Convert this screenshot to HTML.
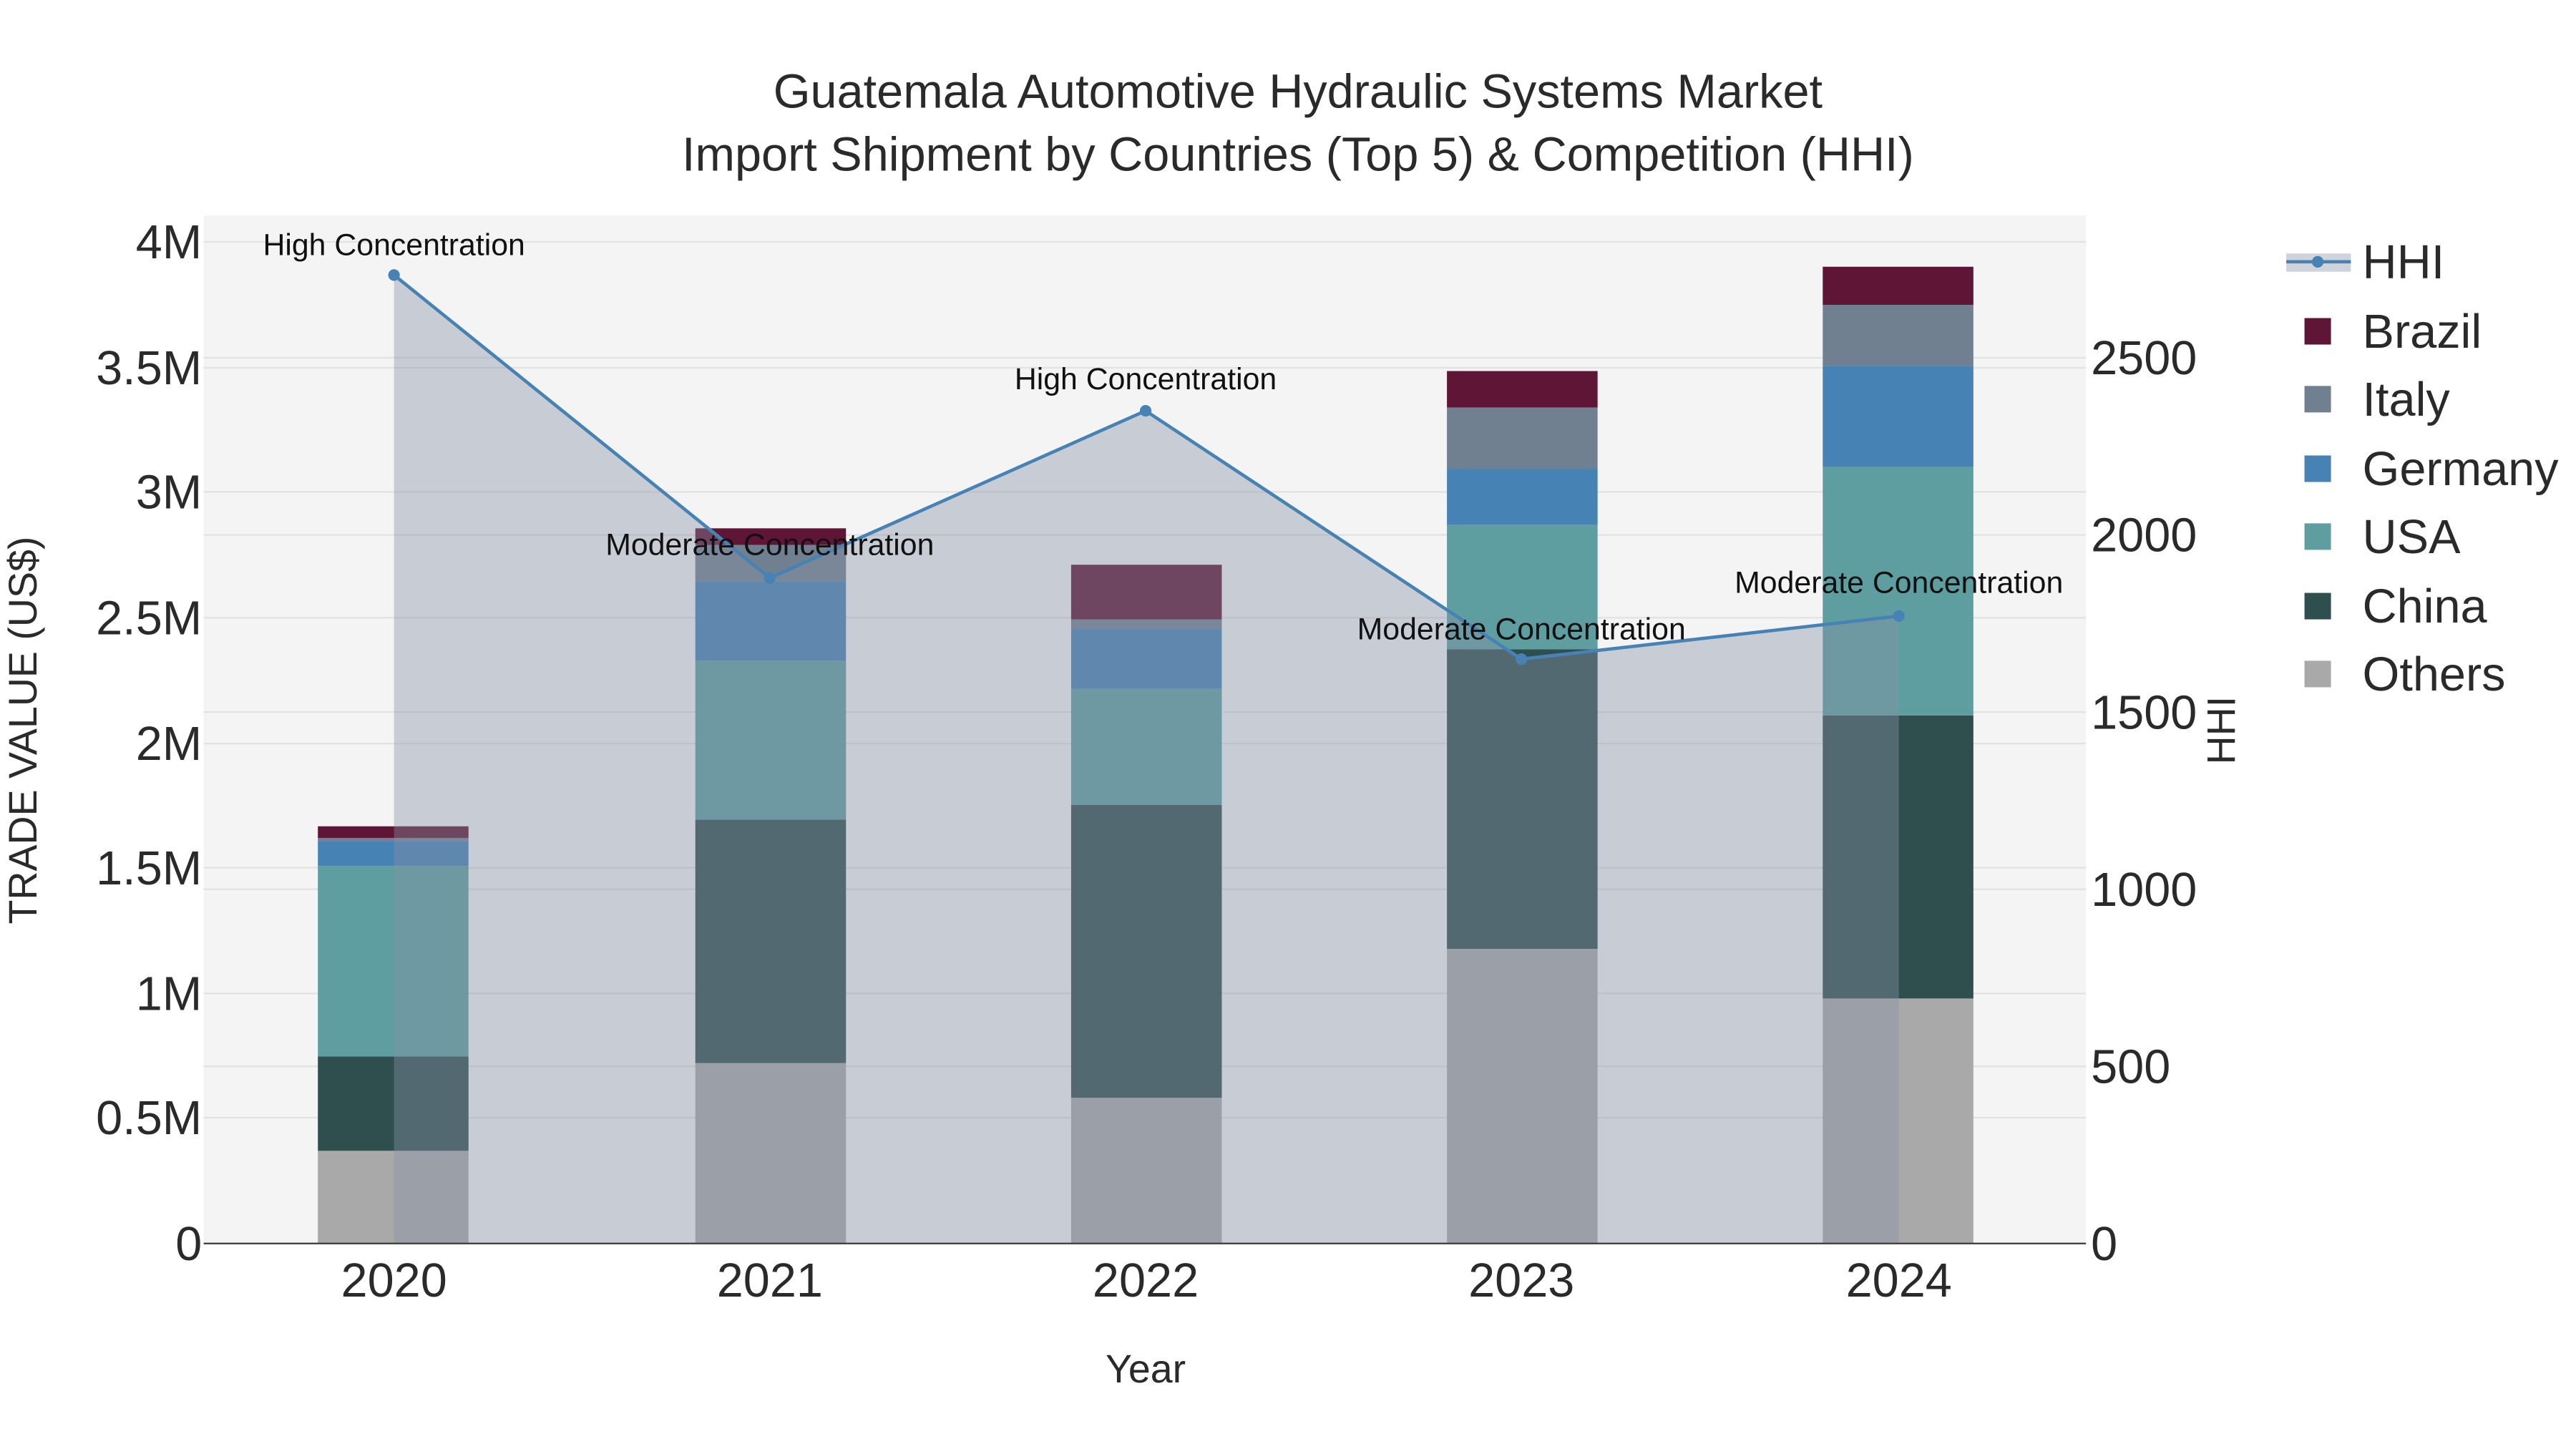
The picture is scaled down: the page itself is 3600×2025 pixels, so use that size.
<!DOCTYPE html>
<html><head><meta charset="utf-8"><style>
html,body{margin:0;padding:0;background:#fff;}
svg{display:block;}
text{font-family:"Liberation Sans",Arial,sans-serif;}
</style></head><body>
<svg width="3600" height="2025" viewBox="0 0 1556 875" xmlns="http://www.w3.org/2000/svg">
<rect width="1556" height="875" fill="#fff"/>
<rect x="123" y="130" width="1137" height="621" fill="#f4f4f4"/>
<g stroke="#e2e2e2" stroke-width="1">
<line x1="123" x2="1260" y1="146" y2="146"/><line x1="123" x2="1260" y1="222" y2="222"/>
<line x1="123" x2="1260" y1="297" y2="297"/><line x1="123" x2="1260" y1="373" y2="373"/>
<line x1="123" x2="1260" y1="449" y2="449"/><line x1="123" x2="1260" y1="524" y2="524"/>
<line x1="123" x2="1260" y1="600" y2="600"/><line x1="123" x2="1260" y1="675" y2="675"/>
<line x1="123" x2="1260" y1="216" y2="216"/><line x1="123" x2="1260" y1="323" y2="323"/>
<line x1="123" x2="1260" y1="430" y2="430"/><line x1="123" x2="1260" y1="537" y2="537"/>
<line x1="123" x2="1260" y1="644" y2="644"/>
</g>
<g>
<rect x="192" y="695" width="91" height="56" fill="#a9a9a9"/>
<rect x="192" y="638" width="91" height="57" fill="#2f4f4f"/>
<rect x="192" y="523" width="91" height="115" fill="#5f9ea0"/>
<rect x="192" y="508" width="91" height="15" fill="#4682b4"/>
<rect x="192" y="506" width="91" height="2" fill="#708090"/>
<rect x="192" y="499" width="91" height="7" fill="#5f1535"/>

<rect x="420" y="642" width="91" height="109" fill="#a9a9a9"/>
<rect x="420" y="495" width="91" height="147" fill="#2f4f4f"/>
<rect x="420" y="399" width="91" height="96" fill="#5f9ea0"/>
<rect x="420" y="351" width="91" height="48" fill="#4682b4"/>
<rect x="420" y="329" width="91" height="22" fill="#708090"/>
<rect x="420" y="319" width="91" height="10" fill="#5f1535"/>

<rect x="647" y="663" width="91" height="88" fill="#a9a9a9"/>
<rect x="647" y="486" width="91" height="177" fill="#2f4f4f"/>
<rect x="647" y="416" width="91" height="70" fill="#5f9ea0"/>
<rect x="647" y="380" width="91" height="36" fill="#4682b4"/>
<rect x="647" y="374" width="91" height="6" fill="#708090"/>
<rect x="647" y="341" width="91" height="33" fill="#5f1535"/>

<rect x="874" y="573" width="91" height="178" fill="#a9a9a9"/>
<rect x="874" y="392" width="91" height="181" fill="#2f4f4f"/>
<rect x="874" y="317" width="91" height="75" fill="#5f9ea0"/>
<rect x="874" y="283" width="91" height="34" fill="#4682b4"/>
<rect x="874" y="246" width="91" height="37" fill="#708090"/>
<rect x="874" y="224" width="91" height="22" fill="#5f1535"/>

<rect x="1101" y="603" width="91" height="148" fill="#a9a9a9"/>
<rect x="1101" y="432" width="91" height="171" fill="#2f4f4f"/>
<rect x="1101" y="282" width="91" height="150" fill="#5f9ea0"/>
<rect x="1101" y="221" width="91" height="61" fill="#4682b4"/>
<rect x="1101" y="184" width="91" height="37" fill="#708090"/>
<rect x="1101" y="161" width="91" height="23" fill="#5f1535"/>
</g>
<polygon points="238,166 465,349 692,248 919,398 1147,372 1147,751 238,751" fill="rgba(134,144,164,0.4)"/>
<polyline points="238,166 465,349 692,248 919,398 1147,372" fill="none" stroke="#4682b4" stroke-width="2"/>
<g fill="#4682b4">
<circle cx="238" cy="166" r="3.5"/><circle cx="465" cy="349" r="3.5"/><circle cx="692" cy="248" r="3.5"/>
<circle cx="919" cy="398" r="3.5"/><circle cx="1147" cy="372" r="3.5"/>
</g>
<line x1="123" x2="1260" y1="751" y2="751" stroke="#444" stroke-width="1"/>
<g font-size="18.5" fill="#111" text-anchor="middle">
<text x="238" y="154">High Concentration</text>
<text x="465" y="335">Moderate Concentration</text>
<text x="692" y="235">High Concentration</text>
<text x="919" y="386">Moderate Concentration</text>
<text x="1147" y="358">Moderate Concentration</text>
</g>
<g font-size="28.8" fill="#2a2a2a" text-anchor="middle">
<text x="784" y="65">Guatemala Automotive Hydraulic Systems Market</text>
<text x="784" y="103">Import Shipment by Countries (Top 5) &amp; Competition (HHI)</text>
</g>
<g font-size="28.8" fill="#2a2a2a" text-anchor="end">
<text x="122" y="761">0</text><text x="122" y="685">0.5M</text><text x="122" y="610">1M</text>
<text x="122" y="534">1.5M</text><text x="122" y="459">2M</text><text x="122" y="383">2.5M</text>
<text x="122" y="307">3M</text><text x="122" y="232">3.5M</text><text x="122" y="156">4M</text>
</g>
<g font-size="28.8" fill="#2a2a2a">
<text x="1263" y="761">0</text><text x="1263" y="654">500</text><text x="1263" y="547">1000</text>
<text x="1263" y="440">1500</text><text x="1263" y="333">2000</text><text x="1263" y="226">2500</text>
</g>
<g font-size="28.8" fill="#2a2a2a" text-anchor="middle">
<text x="238" y="783">2020</text><text x="465" y="783">2021</text><text x="692" y="783">2022</text>
<text x="919" y="783">2023</text><text x="1147" y="783">2024</text>
</g>
<text x="692" y="835" font-size="24" fill="#2a2a2a" text-anchor="middle">Year</text>
<text transform="translate(22,441) rotate(-90)" font-size="24" fill="#2a2a2a" text-anchor="middle">TRADE VALUE (US$)</text>
<text transform="translate(1350,441) rotate(-90)" font-size="24" fill="#2a2a2a" text-anchor="middle">HHI</text>
<rect x="1381" y="153" width="39" height="11" fill="rgba(134,144,164,0.4)"/>
<line x1="1381" x2="1420" y1="158" y2="158" stroke="#4682b4" stroke-width="2"/>
<circle cx="1400" cy="158" r="3.5" fill="#4682b4"/>
<rect x="1392" y="192" width="16" height="16" fill="#5f1535"/>
<rect x="1392" y="233" width="16" height="16" fill="#708090"/>
<rect x="1392" y="275" width="16" height="16" fill="#4682b4"/>
<rect x="1392" y="316" width="16" height="16" fill="#5f9ea0"/>
<rect x="1392" y="358" width="16" height="16" fill="#2f4f4f"/>
<rect x="1392" y="399" width="16" height="16" fill="#a9a9a9"/>
<g font-size="28.8" fill="#2a2a2a">
<text x="1427" y="168">HHI</text><text x="1427" y="210">Brazil</text><text x="1427" y="251">Italy</text>
<text x="1427" y="293">Germany</text><text x="1427" y="334">USA</text><text x="1427" y="376">China</text>
<text x="1427" y="417">Others</text>
</g>
</svg>
</body></html>
